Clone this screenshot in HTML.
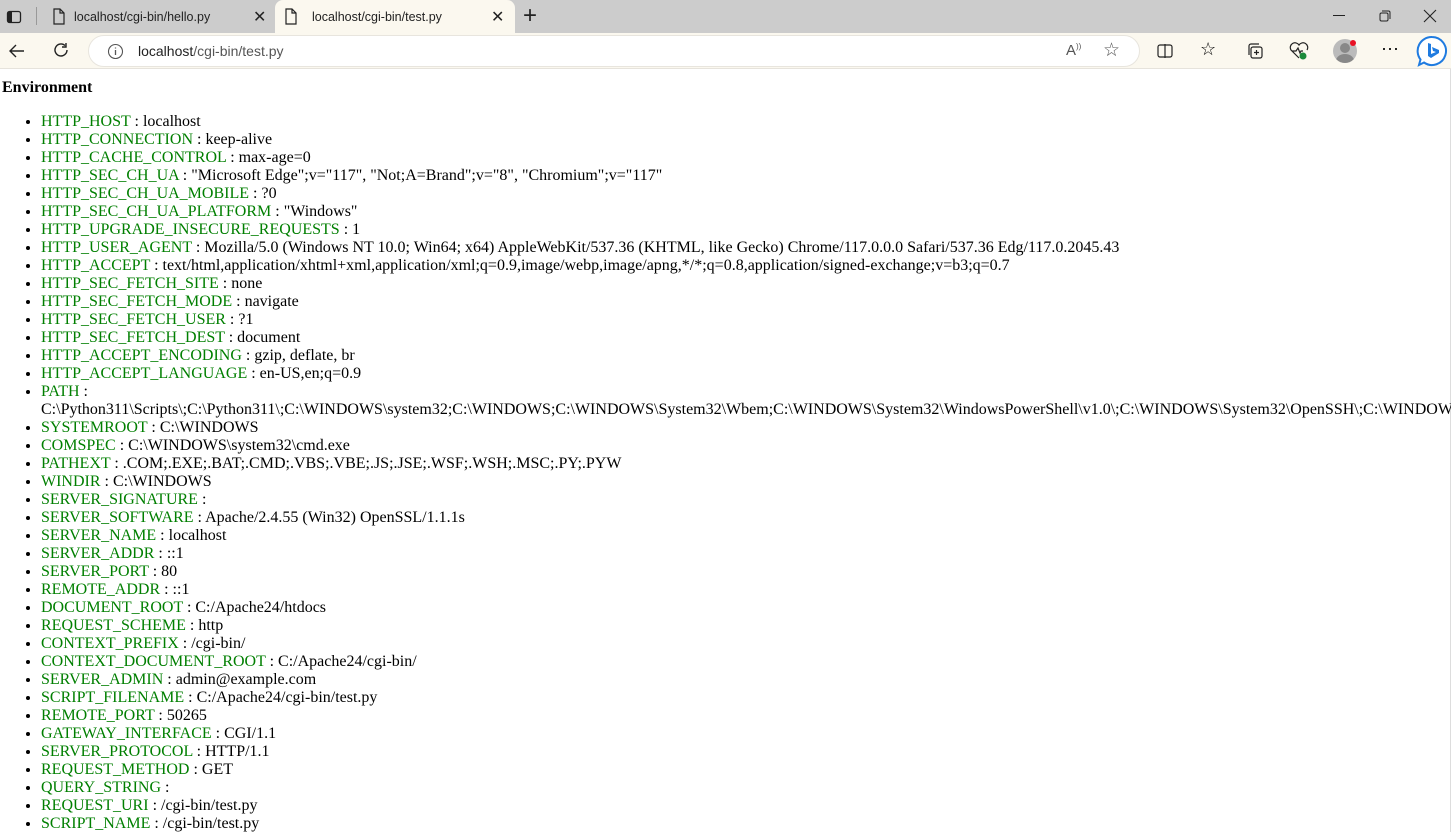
<!DOCTYPE html>
<html><head><meta charset="utf-8"><style>
*{box-sizing:border-box}
html,body{margin:0;padding:0;width:1451px;height:832px;overflow:hidden;background:#fff}
.tabs{position:absolute;left:0;top:0;width:1451px;height:33px;background:#cccccc;font-family:"Liberation Sans",sans-serif;font-size:12.5px;color:#222}
.tab{position:absolute;top:0;height:33px;display:flex;align-items:center}
.act{background:#fbf8ef;border-radius:8px 8px 0 0}
.tb{position:absolute;left:0;top:33px;width:1451px;height:36px;background:#fbf8ef;border-bottom:1px solid #e6e3dc}
.url{position:absolute;left:88px;top:2px;width:1052px;height:32px;background:#fff;border:1px solid #e8e5de;border-radius:16px;font-family:"Liberation Sans",sans-serif;font-size:14px;color:#222}
.content{position:absolute;left:-1px;top:69px;width:1452px;height:763px;background:#fff;border-right:1px solid #ddd;font-family:"Liberation Serif",serif;font-size:16px;line-height:18px;white-space:nowrap}
h4{margin:10px 0 0 3px;font-size:16px;line-height:18px}
ul{margin:16px 0 0 1px;padding-left:41px}
li span{color:#007f00}
svg{position:absolute}
</style></head><body>
<div class="tabs">
<svg style="left:6px;top:9px" width="16" height="16" viewBox="0 0 16 16"><rect x="1.5" y="2.5" width="13" height="11" rx="2" fill="none" stroke="#222" stroke-width="1.3"/><rect x="2" y="3" width="4" height="10" fill="#222"/></svg>
<div style="position:absolute;left:36px;top:7px;width:1px;height:18px;background:#999"></div>
<div class="tab" style="left:46px;width:228px">
<svg style="left:6px;top:8px" width="14" height="17" viewBox="0 0 14 17"><path d="M2 1h6l4 4v11H2z M8 1v4h4" fill="none" stroke="#222" stroke-width="1.2"/></svg>
<span style="position:absolute;left:28px">localhost/cgi-bin/hello.py</span>
<span style="position:absolute;left:207px;font-size:16px">✕</span></div>
<div class="tab act" style="left:275px;width:240px">
<svg style="left:9px;top:8px" width="14" height="17" viewBox="0 0 14 17"><path d="M2 1h6l4 4v11H2z M8 1v4h4" fill="none" stroke="#222" stroke-width="1.2"/></svg>
<span style="position:absolute;left:37px">localhost/cgi-bin/test.py</span>
<span style="position:absolute;left:216px;font-size:16px">✕</span></div>
<span style="position:absolute;left:523px;top:2px;font-size:24px;font-weight:300">+</span>
<div style="position:absolute;left:1333px;top:15px;width:12px;height:1px;background:#222"></div>
<svg style="left:1378px;top:9px" width="14" height="14" viewBox="0 0 14 14"><rect x="2" y="4" width="8" height="8" rx="1.5" fill="none" stroke="#222"/><path d="M4 2h6.5a1.5 1.5 0 0 1 1.5 1.5V10" fill="none" stroke="#222"/></svg>
<svg style="left:1423px;top:9px" width="14" height="14" viewBox="0 0 14 14"><path d="M1 1L13 13M13 1L1 13" stroke="#222" stroke-width="1.1"/></svg>
</div>
<div class="tb">
<svg style="left:8px;top:9px" width="18" height="18" viewBox="0 0 18 18"><path d="M16 9H2M8 3L2 9l6 6" fill="none" stroke="#222" stroke-width="1.4"/></svg>
<svg style="left:52px;top:8px" width="18" height="18" viewBox="0 0 18 18"><path d="M15 9a6 6 0 1 1-2-4.5M14 2v4h-4" fill="none" stroke="#222" stroke-width="1.4"/></svg>
<div class="url">
<svg style="left:18px;top:7px" width="17" height="17" viewBox="0 0 17 17"><circle cx="8.5" cy="8.5" r="7" fill="none" stroke="#555" stroke-width="1.1"/><path d="M8.5 7v5M8.5 4.5v1" stroke="#555" stroke-width="1.3"/></svg>
<span style="position:absolute;left:49px;top:7px">localhost<span style="color:#555">/cgi-bin/test.py</span></span>
<span style="position:absolute;left:977px;top:6px;font-size:15px;color:#555">A<sup style="font-size:8px">))</sup></span>
<span style="position:absolute;left:1014px;top:3px;font-size:19px;color:#555">☆</span>
</div>
<svg style="left:1157px;top:10px" width="16" height="16" viewBox="0 0 16 16"><rect x="1" y="2" width="14" height="12" rx="2" fill="none" stroke="#222" stroke-width="1.2"/><path d="M8 1v14" stroke="#222" stroke-width="1.2"/></svg>
<span style="position:absolute;left:1200px;top:6px;font-size:18px">☆</span>
<svg style="left:1246px;top:9px" width="18" height="18" viewBox="0 0 18 18"><rect x="5" y="5" width="11" height="11" rx="2" fill="none" stroke="#222" stroke-width="1.2"/><path d="M3 13V4a2 2 0 0 1 2-2h8M10.5 8v5M8 10.5h5" fill="none" stroke="#222" stroke-width="1.2"/></svg>
<svg style="left:1289px;top:9px" width="20" height="18" viewBox="0 0 20 18"><path d="M10 16L2 8a4 4 0 0 1 8-5a4 4 0 0 1 8 5M3 9h4l2-3 2 5 1-2h2" fill="none" stroke="#222" stroke-width="1.2"/><circle cx="14" cy="14" r="3.5" fill="#1a8a3a"/></svg>
<div style="position:absolute;left:1333px;top:6px;width:24px;height:24px;border-radius:50%;background:#bbb;overflow:hidden"><div style="position:absolute;left:7px;top:4px;width:10px;height:10px;border-radius:50%;background:#888"></div><div style="position:absolute;left:3px;top:15px;width:18px;height:14px;border-radius:50%;background:#888"></div></div>
<div style="position:absolute;left:1350px;top:7px;width:6px;height:6px;border-radius:50%;background:#e81123"></div>
<span style="position:absolute;left:1381px;top:5px;font-size:18px;font-family:'Liberation Sans',sans-serif">···</span>
<svg style="left:1416px;top:2px" width="32" height="32" viewBox="0 0 32 32"><path d="M16 2a14 14 0 1 1-8 25.5L3 30l1.5-5.5A14 14 0 0 1 16 2z" fill="#fff" stroke="#1f7be0" stroke-width="2"/><path d="M12 8l3 1v10l5-2-3-1-1-4 7 3v3l-8 5-3-2z" fill="#1f7be0"/></svg>
</div>
<div class="content">
<h4>Environment</h4>
<ul>
<li><span>HTTP_HOST</span> : localhost</li>
<li><span>HTTP_CONNECTION</span> : keep-alive</li>
<li><span>HTTP_CACHE_CONTROL</span> : max-age=0</li>
<li><span>HTTP_SEC_CH_UA</span> : "Microsoft Edge";v="117", "Not;A=Brand";v="8", "Chromium";v="117"</li>
<li><span>HTTP_SEC_CH_UA_MOBILE</span> : ?0</li>
<li><span>HTTP_SEC_CH_UA_PLATFORM</span> : "Windows"</li>
<li><span>HTTP_UPGRADE_INSECURE_REQUESTS</span> : 1</li>
<li><span>HTTP_USER_AGENT</span> : Mozilla/5.0 (Windows NT 10.0; Win64; x64) AppleWebKit/537.36 (KHTML, like Gecko) Chrome/117.0.0.0 Safari/537.36 Edg/117.0.2045.43</li>
<li><span>HTTP_ACCEPT</span> : text/html,application/xhtml+xml,application/xml;q=0.9,image/webp,image/apng,*/*;q=0.8,application/signed-exchange;v=b3;q=0.7</li>
<li><span>HTTP_SEC_FETCH_SITE</span> : none</li>
<li><span>HTTP_SEC_FETCH_MODE</span> : navigate</li>
<li><span>HTTP_SEC_FETCH_USER</span> : ?1</li>
<li><span>HTTP_SEC_FETCH_DEST</span> : document</li>
<li><span>HTTP_ACCEPT_ENCODING</span> : gzip, deflate, br</li>
<li><span>HTTP_ACCEPT_LANGUAGE</span> : en-US,en;q=0.9</li>
<li><span>PATH</span> :<br>C:\Python311\Scripts\;C:\Python311\;C:\WINDOWS\system32;C:\WINDOWS;C:\WINDOWS\System32\Wbem;C:\WINDOWS\System32\WindowsPowerShell\v1.0\;C:\WINDOWS\System32\OpenSSH\;C:\WINDOWS</li>
<li><span>SYSTEMROOT</span> : C:\WINDOWS</li>
<li><span>COMSPEC</span> : C:\WINDOWS\system32\cmd.exe</li>
<li><span>PATHEXT</span> : .COM;.EXE;.BAT;.CMD;.VBS;.VBE;.JS;.JSE;.WSF;.WSH;.MSC;.PY;.PYW</li>
<li><span>WINDIR</span> : C:\WINDOWS</li>
<li><span>SERVER_SIGNATURE</span> : </li>
<li><span>SERVER_SOFTWARE</span> : Apache/2.4.55 (Win32) OpenSSL/1.1.1s</li>
<li><span>SERVER_NAME</span> : localhost</li>
<li><span>SERVER_ADDR</span> : ::1</li>
<li><span>SERVER_PORT</span> : 80</li>
<li><span>REMOTE_ADDR</span> : ::1</li>
<li><span>DOCUMENT_ROOT</span> : C:/Apache24/htdocs</li>
<li><span>REQUEST_SCHEME</span> : http</li>
<li><span>CONTEXT_PREFIX</span> : /cgi-bin/</li>
<li><span>CONTEXT_DOCUMENT_ROOT</span> : C:/Apache24/cgi-bin/</li>
<li><span>SERVER_ADMIN</span> : admin@example.com</li>
<li><span>SCRIPT_FILENAME</span> : C:/Apache24/cgi-bin/test.py</li>
<li><span>REMOTE_PORT</span> : 50265</li>
<li><span>GATEWAY_INTERFACE</span> : CGI/1.1</li>
<li><span>SERVER_PROTOCOL</span> : HTTP/1.1</li>
<li><span>REQUEST_METHOD</span> : GET</li>
<li><span>QUERY_STRING</span> : </li>
<li><span>REQUEST_URI</span> : /cgi-bin/test.py</li>
<li><span>SCRIPT_NAME</span> : /cgi-bin/test.py</li>
</ul>
</div>
</body></html>
